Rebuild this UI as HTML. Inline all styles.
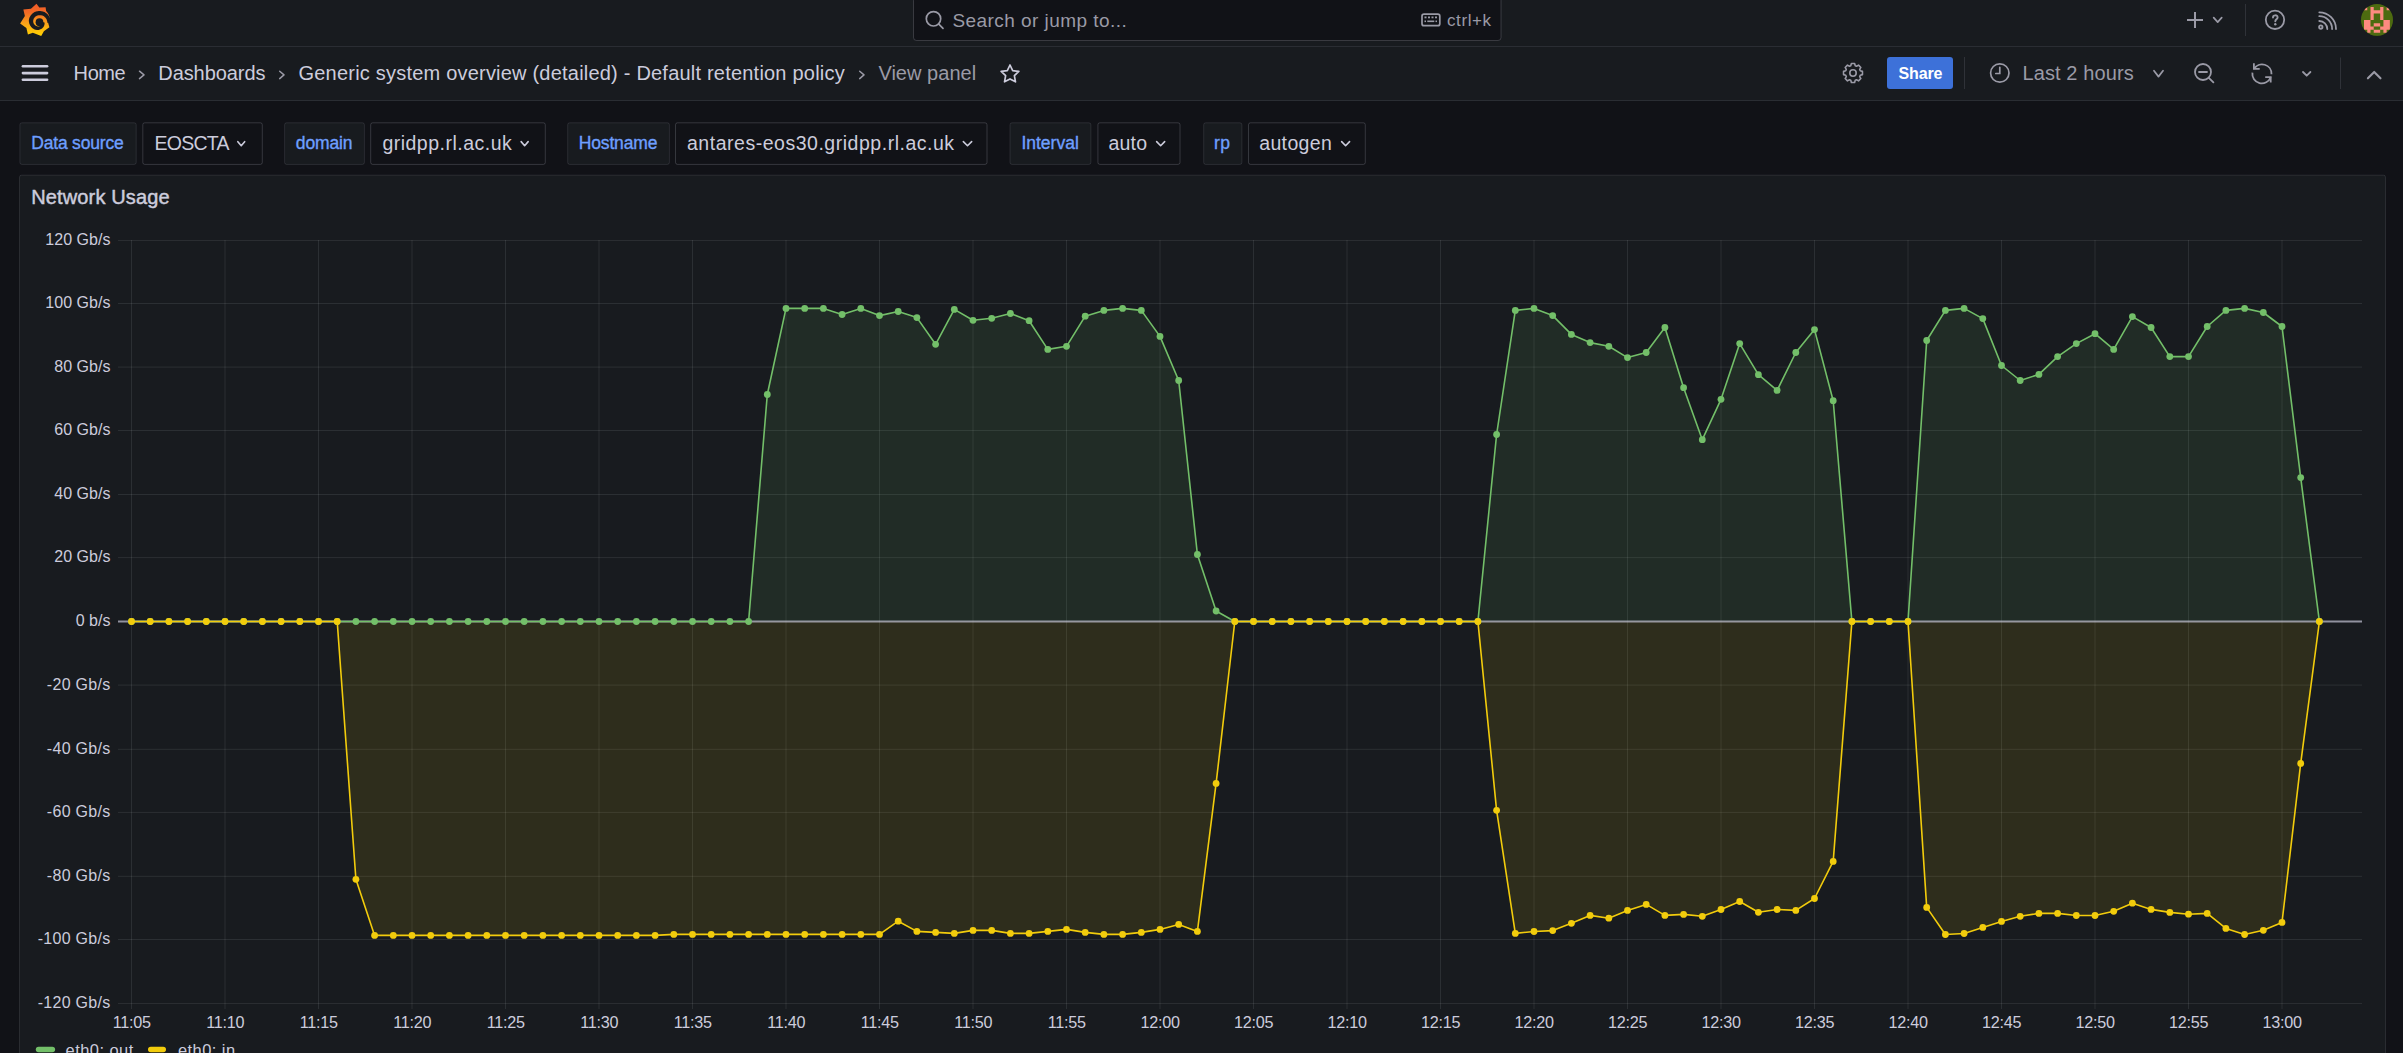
<!DOCTYPE html>
<html><head><meta charset="utf-8"><title>Network Usage - Grafana</title>
<style>
html,body{margin:0;padding:0;background:#111217;width:2403px;height:1053px;overflow:hidden;}
svg{display:block;font-family:"Liberation Sans", sans-serif;}
</style></head>
<body>
<svg width="2403" height="1053" viewBox="0 0 2403 1053">
<rect x="0" y="0" width="2403" height="1053" fill="#111217"/>
<rect x="0" y="0" width="2403" height="46" fill="#181b1f"/>
<rect x="0" y="46" width="2403" height="1" fill="#2a2d33"/>
<rect x="0" y="47" width="2403" height="53" fill="#181b1f"/>
<rect x="0" y="100" width="2403" height="1" fill="#2a2d33"/>
<g transform="translate(15,0) scale(0.03799)">
<defs><linearGradient id="lg" gradientUnits="userSpaceOnUse" x1="0" y1="945" x2="0" y2="100"><stop offset="0" stop-color="#ffd400"/><stop offset="0.4" stop-color="#f9a11a"/><stop offset="0.72" stop-color="#f26b25"/><stop offset="1" stop-color="#f05a28"/></linearGradient></defs>
<path fill="url(#lg)" d="M565,100 L640,195 L805,190 L820,290 C875,350 915,430 915,505 L875,610 L905,720 L760,820 L690,945 L470,860 L340,905 L300,740 L135,620 L260,420 L220,250 L420,230 Z"/>
<path fill="#181b1f" d="M945,610 L946,585 L944,560 L941,536 L935,512 L928,489 L919,467 L908,445 L896,425 L883,405 L867,387 L851,370 L833,355 L815,341 L795,329 L775,318 L754,309 L732,302 L710,297 L688,293 L666,291 L644,290 L622,291 L600,293 L578,297 L557,303 L536,310 L516,319 L497,329 L479,341 L461,355 L445,369 L431,385 L417,402 L405,420 L394,438 L385,457 L377,477 L371,498 L367,519 L364,540 L365,561 L368,582 L372,602 L377,622 L384,641 L393,660 L403,677 L414,693 L426,709 L440,723 L454,736 L469,748 L485,758 L501,767 L518,774 L535,780 L553,785 L571,788 L588,790 L606,790 L623,788 L640,784 L656,779 L671,773 L686,765 L700,757 L713,748 L724,738 L735,727 L745,715 L753,703 L760,691 L766,678 L771,665 L775,652 L777,639 L778,626 L779,614 L778,601 L776,589 L716,582 L717,589 L718,596 L717,604 L716,611 L715,619 L712,626 L709,633 L706,641 L702,648 L697,654 L691,661 L685,667 L678,673 L671,678 L663,682 L654,686 L646,690 L636,692 L627,694 L617,696 L607,696 L597,695 L587,693 L577,690 L567,687 L558,683 L548,678 L539,672 L530,665 L522,658 L515,650 L508,641 L501,632 L495,622 L490,612 L486,601 L483,589 L481,578 L479,566 L479,554 L480,541 L482,529 L485,517 L488,505 L493,494 L499,483 L506,472 L513,462 L522,452 L531,443 L541,435 L551,427 L563,421 L574,415 L587,410 L599,406 L612,403 L626,401 L639,400 L653,400 L667,400 L681,401 L695,403 L709,406 L723,411 L736,417 L750,423 L763,431 L775,440 L787,451 L798,462 L808,474 L817,487 L826,501 L833,516 L839,531 L844,547 L848,564 L850,581 L851,598 Z"/>
<circle cx="645" cy="585" r="102" fill="#181b1f"/>
</g>
<rect x="913.5" y="-2.5" width="587.5" height="43" rx="3" fill="#111217" stroke="rgba(204,204,220,0.20)" stroke-width="1"/>
<g fill="none" stroke="#9a9aa6" stroke-width="1.7" stroke-linecap="round"><circle cx="933.5" cy="18.8" r="7.2"/><path d="M938.8,24.1 L943,28.3"/></g>
<text x="952.4" y="26.8" font-size="19" fill="#9a9aa6" letter-spacing="0.45" font-weight="400" text-anchor="start" >Search or jump to...</text>
<g fill="none" stroke="#9a9aa6" stroke-width="1.7"><rect x="1422" y="14.2" width="17.8" height="11.5" rx="2"/></g><g fill="#9a9aa6"><rect x="1424.5" y="16.5" width="2" height="1.8"/><rect x="1428" y="16.5" width="2" height="1.8"/><rect x="1431.5" y="16.5" width="2" height="1.8"/><rect x="1435" y="16.5" width="2" height="1.8"/><rect x="1424.5" y="20.5" width="1.5" height="1.6"/><rect x="1427.3" y="20.5" width="7" height="1.6"/><rect x="1435.5" y="20.5" width="1.5" height="1.6"/></g>
<text x="1447" y="26" font-size="17" fill="#9a9aa6" letter-spacing="0.59" font-weight="400" text-anchor="start" >ctrl+k</text>
<g stroke="#9a9aa6" stroke-width="2" fill="none"><path d="M2195,12.1 V28.1 M2187,20.1 H2203"/></g>
<path d="M2213.68,17.68 L2217.70,22.12 L2221.72,17.68" fill="none" stroke="#9a9aa6" stroke-width="1.7" stroke-linecap="round" stroke-linejoin="round"/>
<rect x="2245" y="4" width="1" height="32" fill="#2f3238"/>
<circle cx="2275" cy="19.8" r="9.2" fill="none" stroke="#9a9aa6" stroke-width="1.8"/>
<path d="M2273,17.6 C2273,14.6 2277.6,14.6 2277.6,17.4 C2277.6,19.3 2275.3,19.3 2275.3,21.3" fill="none" stroke="#9a9aa6" stroke-width="1.9" stroke-linecap="round"/><circle cx="2275.3" cy="24.2" r="1.2" fill="#9a9aa6"/>
<g fill="none" stroke="#9a9aa6" stroke-width="1.8" stroke-linecap="round"><circle cx="2320.8" cy="27.1" r="1.7"/><path d="M2319.3,21 A8,8 0 0 1 2327.3,29"/><path d="M2319.3,16.2 A12.8,12.8 0 0 1 2332.1,29"/><path d="M2319.3,12.3 A16.7,16.7 0 0 1 2336,29"/></g>
<defs><clipPath id="avc"><circle cx="2377" cy="19.9" r="16"/></clipPath></defs><g clip-path="url(#avc)"><rect x="2361" y="3.9" width="32" height="32" fill="#4d6b10"/><path fill="#fd8a80" d="M2364.03,7.03 h3.23 v3.23 h-3.23 Z M2370.49,7.03 h3.23 v3.23 h-3.23 Z M2380.18,7.03 h3.23 v3.23 h-3.23 Z M2386.64,7.03 h3.23 v3.23 h-3.23 Z M2370.49,10.26 h3.23 v3.23 h-3.23 Z M2373.72,10.26 h3.23 v3.23 h-3.23 Z M2376.95,10.26 h3.23 v3.23 h-3.23 Z M2380.18,10.26 h3.23 v3.23 h-3.23 Z M2370.49,13.49 h3.23 v3.23 h-3.23 Z M2380.18,13.49 h3.23 v3.23 h-3.23 Z M2370.49,16.72 h3.23 v3.23 h-3.23 Z M2380.18,16.72 h3.23 v3.23 h-3.23 Z M2364.03,19.95 h3.23 v3.23 h-3.23 Z M2367.26,19.95 h3.23 v3.23 h-3.23 Z M2383.41,19.95 h3.23 v3.23 h-3.23 Z M2386.64,19.95 h3.23 v3.23 h-3.23 Z M2364.03,23.18 h3.23 v3.23 h-3.23 Z M2367.26,23.18 h3.23 v3.23 h-3.23 Z M2373.72,23.18 h3.23 v3.23 h-3.23 Z M2376.95,23.18 h3.23 v3.23 h-3.23 Z M2383.41,23.18 h3.23 v3.23 h-3.23 Z M2386.64,23.18 h3.23 v3.23 h-3.23 Z M2364.03,26.41 h3.23 v3.23 h-3.23 Z M2367.26,26.41 h3.23 v3.23 h-3.23 Z M2370.49,26.41 h3.23 v3.23 h-3.23 Z M2380.18,26.41 h3.23 v3.23 h-3.23 Z M2383.41,26.41 h3.23 v3.23 h-3.23 Z M2386.64,26.41 h3.23 v3.23 h-3.23 Z M2367.26,29.64 h3.23 v3.23 h-3.23 Z M2373.72,29.64 h3.23 v3.23 h-3.23 Z M2376.95,29.64 h3.23 v3.23 h-3.23 Z M2383.41,29.64 h3.23 v3.23 h-3.23 Z"/></g>
<g fill="#ccccdc"><rect x="21.6" y="65" width="26.8" height="2.6" rx="1.3"/><rect x="21.6" y="71.8" width="26.8" height="2.6" rx="1.3"/><rect x="21.6" y="78.4" width="26.8" height="2.6" rx="1.3"/></g>
<text x="73.6" y="80.2" font-size="20" fill="#ccccdc" letter-spacing="-0.4" font-weight="400" text-anchor="start" >Home</text>
<path d="M139.5,71.2 L144,74.9 L139.5,78.6" fill="none" stroke="#9a9aa6" stroke-width="1.5" stroke-linecap="round" stroke-linejoin="round"/>
<text x="158.3" y="80.2" font-size="20" fill="#ccccdc" letter-spacing="-0.08" font-weight="400" text-anchor="start" >Dashboards</text>
<path d="M279.7,71.2 L284,74.9 L279.7,78.6" fill="none" stroke="#9a9aa6" stroke-width="1.5" stroke-linecap="round" stroke-linejoin="round"/>
<text x="298.5" y="80.2" font-size="20" fill="#ccccdc" letter-spacing="0.21" font-weight="400" text-anchor="start" >Generic system overview (detailed) - Default retention policy</text>
<path d="M859.7,71.2 L864,74.9 L859.7,78.6" fill="none" stroke="#9a9aa6" stroke-width="1.5" stroke-linecap="round" stroke-linejoin="round"/>
<text x="878.4" y="80.2" font-size="20" fill="#9a9aa6" letter-spacing="0.03" font-weight="400" text-anchor="start" >View panel</text>
<path d="M1010.00,65.00 L1012.70,70.58 L1018.84,71.43 L1014.37,75.72 L1015.47,81.82 L1010.00,78.90 L1004.53,81.82 L1005.63,75.72 L1001.16,71.43 L1007.30,70.58 Z" fill="none" stroke="#ccccdc" stroke-width="1.7" stroke-linejoin="round"/>
<path d="M1860.26,70.75 L1862.46,71.38 L1862.46,74.62 L1860.26,75.25 L1859.72,76.55 L1860.84,78.54 L1858.54,80.84 L1856.55,79.72 L1855.25,80.26 L1854.62,82.46 L1851.38,82.46 L1850.75,80.26 L1849.45,79.72 L1847.46,80.84 L1845.16,78.54 L1846.28,76.55 L1845.74,75.25 L1843.54,74.62 L1843.54,71.38 L1845.74,70.75 L1846.28,69.45 L1845.16,67.46 L1847.46,65.16 L1849.45,66.28 L1850.75,65.74 L1851.38,63.54 L1854.62,63.54 L1855.25,65.74 L1856.55,66.28 L1858.54,65.16 L1860.84,67.46 L1859.72,69.45 Z" fill="none" stroke="#9a9aa6" stroke-width="1.6" stroke-linejoin="round"/>
<circle cx="1853" cy="73" r="3.2" fill="none" stroke="#9a9aa6" stroke-width="1.6"/>
<rect x="1887" y="57" width="66" height="32" rx="3" fill="#3d71d9"/>
<text x="1898.4" y="79.3" font-size="16" fill="#ffffff" letter-spacing="-0.09" font-weight="700" text-anchor="start" >Share</text>
<rect x="1964" y="57" width="1" height="32" fill="#2f3238"/>
<circle cx="1999.8" cy="73" r="9.2" fill="none" stroke="#9a9aa6" stroke-width="1.7"/><path d="M1999.8,67.3 V73.5 H1995.8" fill="none" stroke="#9a9aa6" stroke-width="1.7" stroke-linecap="round"/>
<text x="2022.4" y="80.2" font-size="20" fill="#9a9aa6" letter-spacing="0.12" font-weight="400" text-anchor="start" >Last 2 hours</text>
<path d="M2153.98,70.68 L2158.50,76.62 L2163.02,70.68" fill="none" stroke="#9a9aa6" stroke-width="1.7" stroke-linecap="round" stroke-linejoin="round"/>
<g fill="none" stroke="#9a9aa6" stroke-width="1.8" stroke-linecap="round"><circle cx="2203" cy="72" r="8"/><path d="M2208.8,77.8 L2213.4,82.4 M2199,72 H2207"/></g>
<g fill="none" stroke="#9a9aa6" stroke-width="1.8" stroke-linecap="butt" stroke-linejoin="miter"><path d="M2253.9,63.2 V68.9 H2259.7"/><path d="M2253.9,68.9 A9.5,9.5 0 0 1 2271.5,74.2"/><path d="M2252.4,72.6 A9.5,9.5 0 0 0 2270.7,77.2"/><path d="M2265.2,77.2 H2270.7 V82.6"/></g>
<path d="M2303,72 L2306.7,75.7 L2310.4,72" fill="none" stroke="#9a9aa6" stroke-width="1.8" stroke-linecap="round" stroke-linejoin="round"/>
<rect x="2340" y="57.5" width="1" height="31.5" fill="#2f3238"/>
<path d="M2367.9,78.3 L2374.2,71.9 L2380.5,78.3" fill="none" stroke="#9a9aa6" stroke-width="2.1" stroke-linecap="round" stroke-linejoin="round"/>
<rect x="19.9" y="122.8" width="116.3" height="41.6" rx="2" fill="#181b1f" stroke="rgba(204,204,220,0.12)" stroke-width="1"/>
<text x="31.2" y="149.3" font-size="17.5" fill="#6e9fff" letter-spacing="-0.18" font-weight="400" text-anchor="start" stroke="#6e9fff" stroke-width="0.35">Data source</text>
<rect x="284.6" y="122.8" width="79.8" height="41.6" rx="2" fill="#181b1f" stroke="rgba(204,204,220,0.12)" stroke-width="1"/>
<text x="295.8" y="149.3" font-size="17.5" fill="#6e9fff" letter-spacing="-0.15000000000000002" font-weight="400" text-anchor="start" stroke="#6e9fff" stroke-width="0.35">domain</text>
<rect x="567.7" y="122.8" width="101.7" height="41.6" rx="2" fill="#181b1f" stroke="rgba(204,204,220,0.12)" stroke-width="1"/>
<text x="578.8" y="149.3" font-size="17.5" fill="#6e9fff" letter-spacing="-0.16999999999999998" font-weight="400" text-anchor="start" stroke="#6e9fff" stroke-width="0.35">Hostname</text>
<rect x="1010.0" y="122.8" width="80.9" height="41.6" rx="2" fill="#181b1f" stroke="rgba(204,204,220,0.12)" stroke-width="1"/>
<text x="1021.4" y="149.3" font-size="17.5" fill="#6e9fff" letter-spacing="0.0" font-weight="400" text-anchor="start" stroke="#6e9fff" stroke-width="0.35">Interval</text>
<rect x="1203.7" y="122.8" width="38.2" height="41.6" rx="2" fill="#181b1f" stroke="rgba(204,204,220,0.12)" stroke-width="1"/>
<text x="1214" y="149.3" font-size="17.5" fill="#6e9fff" letter-spacing="0.33999999999999997" font-weight="400" text-anchor="start" stroke="#6e9fff" stroke-width="0.35">rp</text>
<rect x="142.8" y="122.8" width="119.5" height="41.6" rx="2" fill="#111217" stroke="rgba(204,204,220,0.20)" stroke-width="1"/>
<text x="154.6" y="150.2" font-size="19.5" fill="#ccccdc" letter-spacing="-0.76" font-weight="400" text-anchor="start" >EOSCTA</text>
<path d="M237.84,141.64 L241.25,145.76 L244.66,141.64" fill="none" stroke="#ccccdc" stroke-width="1.6" stroke-linecap="round" stroke-linejoin="round"/>
<rect x="370.7" y="122.8" width="174.6" height="41.6" rx="2" fill="#111217" stroke="rgba(204,204,220,0.20)" stroke-width="1"/>
<text x="382.4" y="150.2" font-size="19.5" fill="#ccccdc" letter-spacing="0.49" font-weight="400" text-anchor="start" >gridpp.rl.ac.uk</text>
<path d="M521.14,141.64 L524.65,145.76 L528.16,141.64" fill="none" stroke="#ccccdc" stroke-width="1.6" stroke-linecap="round" stroke-linejoin="round"/>
<rect x="675.5" y="122.8" width="311.5" height="41.6" rx="2" fill="#111217" stroke="rgba(204,204,220,0.20)" stroke-width="1"/>
<text x="687" y="150.2" font-size="19.5" fill="#ccccdc" letter-spacing="0.52" font-weight="400" text-anchor="start" >antares-eos30.gridpp.rl.ac.uk</text>
<path d="M963.34,141.64 L967.50,145.76 L971.66,141.64" fill="none" stroke="#ccccdc" stroke-width="1.6" stroke-linecap="round" stroke-linejoin="round"/>
<rect x="1097.9" y="122.8" width="82.1" height="41.6" rx="2" fill="#111217" stroke="rgba(204,204,220,0.20)" stroke-width="1"/>
<text x="1108.5" y="150.2" font-size="19.5" fill="#ccccdc" letter-spacing="0.21" font-weight="400" text-anchor="start" >auto</text>
<path d="M1156.64,141.64 L1160.65,145.76 L1164.66,141.64" fill="none" stroke="#ccccdc" stroke-width="1.6" stroke-linecap="round" stroke-linejoin="round"/>
<rect x="1248.5" y="122.8" width="116.8" height="41.6" rx="2" fill="#111217" stroke="rgba(204,204,220,0.20)" stroke-width="1"/>
<text x="1259.2" y="150.2" font-size="19.5" fill="#ccccdc" letter-spacing="0.37" font-weight="400" text-anchor="start" >autogen</text>
<path d="M1341.64,141.64 L1345.60,145.76 L1349.56,141.64" fill="none" stroke="#ccccdc" stroke-width="1.6" stroke-linecap="round" stroke-linejoin="round"/>
<rect x="19.5" y="175.2" width="2366" height="900" rx="2" fill="#181b1f" stroke="rgba(204,204,220,0.12)" stroke-width="1"/>
<text x="31.2" y="204.3" font-size="20" fill="#ccccdc" letter-spacing="0.14" font-weight="400" text-anchor="start" stroke="#ccccdc" stroke-width="0.45">Network Usage</text>
<line x1="118" y1="240.45" x2="2362" y2="240.45" stroke="rgba(240,250,255,0.09)" stroke-width="1"/>
<line x1="118" y1="303.50" x2="2362" y2="303.50" stroke="rgba(240,250,255,0.09)" stroke-width="1"/>
<line x1="118" y1="367.10" x2="2362" y2="367.10" stroke="rgba(240,250,255,0.09)" stroke-width="1"/>
<line x1="118" y1="430.50" x2="2362" y2="430.50" stroke="rgba(240,250,255,0.09)" stroke-width="1"/>
<line x1="118" y1="494.50" x2="2362" y2="494.50" stroke="rgba(240,250,255,0.09)" stroke-width="1"/>
<line x1="118" y1="557.60" x2="2362" y2="557.60" stroke="rgba(240,250,255,0.09)" stroke-width="1"/>
<line x1="118" y1="685.10" x2="2362" y2="685.10" stroke="rgba(240,250,255,0.09)" stroke-width="1"/>
<line x1="118" y1="749.30" x2="2362" y2="749.30" stroke="rgba(240,250,255,0.09)" stroke-width="1"/>
<line x1="118" y1="812.40" x2="2362" y2="812.40" stroke="rgba(240,250,255,0.09)" stroke-width="1"/>
<line x1="118" y1="876.30" x2="2362" y2="876.30" stroke="rgba(240,250,255,0.09)" stroke-width="1"/>
<line x1="118" y1="939.50" x2="2362" y2="939.50" stroke="rgba(240,250,255,0.09)" stroke-width="1"/>
<line x1="118" y1="1003.45" x2="2362" y2="1003.45" stroke="rgba(240,250,255,0.09)" stroke-width="1"/>
<line x1="131.50" y1="240" x2="131.50" y2="1009" stroke="rgba(240,250,255,0.09)" stroke-width="1"/>
<line x1="225.00" y1="240" x2="225.00" y2="1009" stroke="rgba(240,250,255,0.09)" stroke-width="1"/>
<line x1="318.50" y1="240" x2="318.50" y2="1009" stroke="rgba(240,250,255,0.09)" stroke-width="1"/>
<line x1="412.00" y1="240" x2="412.00" y2="1009" stroke="rgba(240,250,255,0.09)" stroke-width="1"/>
<line x1="505.50" y1="240" x2="505.50" y2="1009" stroke="rgba(240,250,255,0.09)" stroke-width="1"/>
<line x1="599.00" y1="240" x2="599.00" y2="1009" stroke="rgba(240,250,255,0.09)" stroke-width="1"/>
<line x1="692.50" y1="240" x2="692.50" y2="1009" stroke="rgba(240,250,255,0.09)" stroke-width="1"/>
<line x1="786.00" y1="240" x2="786.00" y2="1009" stroke="rgba(240,250,255,0.09)" stroke-width="1"/>
<line x1="879.50" y1="240" x2="879.50" y2="1009" stroke="rgba(240,250,255,0.09)" stroke-width="1"/>
<line x1="973.00" y1="240" x2="973.00" y2="1009" stroke="rgba(240,250,255,0.09)" stroke-width="1"/>
<line x1="1066.50" y1="240" x2="1066.50" y2="1009" stroke="rgba(240,250,255,0.09)" stroke-width="1"/>
<line x1="1160.00" y1="240" x2="1160.00" y2="1009" stroke="rgba(240,250,255,0.09)" stroke-width="1"/>
<line x1="1253.50" y1="240" x2="1253.50" y2="1009" stroke="rgba(240,250,255,0.09)" stroke-width="1"/>
<line x1="1347.00" y1="240" x2="1347.00" y2="1009" stroke="rgba(240,250,255,0.09)" stroke-width="1"/>
<line x1="1440.50" y1="240" x2="1440.50" y2="1009" stroke="rgba(240,250,255,0.09)" stroke-width="1"/>
<line x1="1534.00" y1="240" x2="1534.00" y2="1009" stroke="rgba(240,250,255,0.09)" stroke-width="1"/>
<line x1="1627.50" y1="240" x2="1627.50" y2="1009" stroke="rgba(240,250,255,0.09)" stroke-width="1"/>
<line x1="1721.00" y1="240" x2="1721.00" y2="1009" stroke="rgba(240,250,255,0.09)" stroke-width="1"/>
<line x1="1814.50" y1="240" x2="1814.50" y2="1009" stroke="rgba(240,250,255,0.09)" stroke-width="1"/>
<line x1="1908.00" y1="240" x2="1908.00" y2="1009" stroke="rgba(240,250,255,0.09)" stroke-width="1"/>
<line x1="2001.50" y1="240" x2="2001.50" y2="1009" stroke="rgba(240,250,255,0.09)" stroke-width="1"/>
<line x1="2095.00" y1="240" x2="2095.00" y2="1009" stroke="rgba(240,250,255,0.09)" stroke-width="1"/>
<line x1="2188.50" y1="240" x2="2188.50" y2="1009" stroke="rgba(240,250,255,0.09)" stroke-width="1"/>
<line x1="2282.00" y1="240" x2="2282.00" y2="1009" stroke="rgba(240,250,255,0.09)" stroke-width="1"/>
<path d="M131.50,621.5 L131.50,621.50 L150.20,621.50 L168.90,621.50 L187.60,621.50 L206.30,621.50 L225.00,621.50 L243.70,621.50 L262.40,621.50 L281.10,621.50 L299.80,621.50 L318.50,621.50 L337.20,621.50 L355.90,621.50 L374.60,621.50 L393.30,621.50 L412.00,621.50 L430.70,621.50 L449.40,621.50 L468.10,621.50 L486.80,621.50 L505.50,621.50 L524.20,621.50 L542.90,621.50 L561.60,621.50 L580.30,621.50 L599.00,621.50 L617.70,621.50 L636.40,621.50 L655.10,621.50 L673.80,621.50 L692.50,621.50 L711.20,621.50 L729.90,621.50 L748.60,621.50 L767.30,394.50 L786.00,308.40 L804.70,308.40 L823.40,308.40 L842.10,314.50 L860.80,308.40 L879.50,315.60 L898.20,311.50 L916.90,317.60 L935.60,344.30 L954.30,309.40 L973.00,320.30 L991.70,318.30 L1010.40,313.50 L1029.10,320.70 L1047.80,349.40 L1066.50,346.30 L1085.20,316.20 L1103.90,310.40 L1122.60,308.40 L1141.30,310.40 L1160.00,336.40 L1178.70,380.50 L1197.40,554.50 L1216.10,611.00 L1234.80,621.50 L1253.50,621.50 L1272.20,621.50 L1290.90,621.50 L1309.60,621.50 L1328.30,621.50 L1347.00,621.50 L1365.70,621.50 L1384.40,621.50 L1403.10,621.50 L1421.80,621.50 L1440.50,621.50 L1459.20,621.50 L1477.90,621.50 L1496.60,434.50 L1515.30,310.40 L1534.00,308.40 L1552.70,315.60 L1571.40,334.40 L1590.10,342.60 L1608.80,346.30 L1627.50,357.60 L1646.20,352.50 L1664.90,327.50 L1683.60,387.70 L1702.30,439.70 L1721.00,399.30 L1739.70,343.60 L1758.40,374.70 L1777.10,390.40 L1795.80,352.50 L1814.50,329.60 L1833.20,400.70 L1851.90,621.50 L1870.60,621.50 L1889.30,621.50 L1908.00,621.50 L1926.70,340.50 L1945.40,310.40 L1964.10,308.40 L1982.80,318.60 L2001.50,365.50 L2020.20,380.50 L2038.90,374.40 L2057.60,356.60 L2076.30,343.60 L2095.00,333.70 L2113.70,349.40 L2132.40,316.60 L2151.10,327.50 L2169.80,356.60 L2188.50,356.60 L2207.20,326.50 L2225.90,310.40 L2244.60,308.40 L2263.30,312.50 L2282.00,326.50 L2300.70,477.60 L2319.40,621.50 L2319.40,621.5 Z" fill="rgba(115,191,105,0.105)"/>
<path d="M131.50,621.5 L131.50,621.50 L150.20,621.50 L168.90,621.50 L187.60,621.50 L206.30,621.50 L225.00,621.50 L243.70,621.50 L262.40,621.50 L281.10,621.50 L299.80,621.50 L318.50,621.50 L337.20,621.50 L355.90,879.30 L374.60,935.40 L393.30,935.40 L412.00,935.40 L430.70,935.40 L449.40,935.40 L468.10,935.40 L486.80,935.40 L505.50,935.40 L524.20,935.40 L542.90,935.40 L561.60,935.40 L580.30,935.40 L599.00,935.40 L617.70,935.40 L636.40,935.40 L655.10,935.40 L673.80,934.40 L692.50,934.40 L711.20,934.40 L729.90,934.40 L748.60,934.40 L767.30,934.40 L786.00,934.40 L804.70,934.40 L823.40,934.40 L842.10,934.40 L860.80,934.40 L879.50,934.40 L898.20,921.20 L916.90,931.40 L935.60,932.40 L954.30,933.40 L973.00,930.40 L991.70,930.40 L1010.40,933.40 L1029.10,933.40 L1047.80,931.40 L1066.50,929.40 L1085.20,932.40 L1103.90,934.40 L1122.60,934.40 L1141.30,932.40 L1160.00,929.40 L1178.70,924.40 L1197.40,931.40 L1216.10,783.40 L1234.80,621.50 L1253.50,621.50 L1272.20,621.50 L1290.90,621.50 L1309.60,621.50 L1328.30,621.50 L1347.00,621.50 L1365.70,621.50 L1384.40,621.50 L1403.10,621.50 L1421.80,621.50 L1440.50,621.50 L1459.20,621.50 L1477.90,621.50 L1496.60,810.30 L1515.30,933.40 L1534.00,931.50 L1552.70,930.60 L1571.40,923.30 L1590.10,915.40 L1608.80,918.20 L1627.50,910.40 L1646.20,904.40 L1664.90,915.40 L1683.60,914.40 L1702.30,916.30 L1721.00,909.50 L1739.70,901.50 L1758.40,912.30 L1777.10,909.50 L1795.80,910.40 L1814.50,898.50 L1833.20,861.40 L1851.90,621.50 L1870.60,621.50 L1889.30,621.50 L1908.00,621.50 L1926.70,907.40 L1945.40,934.50 L1964.10,933.50 L1982.80,927.40 L2001.50,921.40 L2020.20,916.30 L2038.90,913.40 L2057.60,913.40 L2076.30,915.50 L2095.00,915.50 L2113.70,911.30 L2132.40,903.20 L2151.10,909.40 L2169.80,912.40 L2188.50,914.20 L2207.20,913.40 L2225.90,928.40 L2244.60,934.50 L2263.30,930.30 L2282.00,922.40 L2300.70,763.40 L2319.40,621.50 L2319.40,621.5 Z" fill="rgba(242,204,12,0.10)"/>
<line x1="118" y1="621.5" x2="2362" y2="621.5" stroke="rgba(204,204,220,0.68)" stroke-width="2"/>
<path d="M131.50,621.50 L150.20,621.50 L168.90,621.50 L187.60,621.50 L206.30,621.50 L225.00,621.50 L243.70,621.50 L262.40,621.50 L281.10,621.50 L299.80,621.50 L318.50,621.50 L337.20,621.50 L355.90,621.50 L374.60,621.50 L393.30,621.50 L412.00,621.50 L430.70,621.50 L449.40,621.50 L468.10,621.50 L486.80,621.50 L505.50,621.50 L524.20,621.50 L542.90,621.50 L561.60,621.50 L580.30,621.50 L599.00,621.50 L617.70,621.50 L636.40,621.50 L655.10,621.50 L673.80,621.50 L692.50,621.50 L711.20,621.50 L729.90,621.50 L748.60,621.50 L767.30,394.50 L786.00,308.40 L804.70,308.40 L823.40,308.40 L842.10,314.50 L860.80,308.40 L879.50,315.60 L898.20,311.50 L916.90,317.60 L935.60,344.30 L954.30,309.40 L973.00,320.30 L991.70,318.30 L1010.40,313.50 L1029.10,320.70 L1047.80,349.40 L1066.50,346.30 L1085.20,316.20 L1103.90,310.40 L1122.60,308.40 L1141.30,310.40 L1160.00,336.40 L1178.70,380.50 L1197.40,554.50 L1216.10,611.00 L1234.80,621.50 L1253.50,621.50 L1272.20,621.50 L1290.90,621.50 L1309.60,621.50 L1328.30,621.50 L1347.00,621.50 L1365.70,621.50 L1384.40,621.50 L1403.10,621.50 L1421.80,621.50 L1440.50,621.50 L1459.20,621.50 L1477.90,621.50 L1496.60,434.50 L1515.30,310.40 L1534.00,308.40 L1552.70,315.60 L1571.40,334.40 L1590.10,342.60 L1608.80,346.30 L1627.50,357.60 L1646.20,352.50 L1664.90,327.50 L1683.60,387.70 L1702.30,439.70 L1721.00,399.30 L1739.70,343.60 L1758.40,374.70 L1777.10,390.40 L1795.80,352.50 L1814.50,329.60 L1833.20,400.70 L1851.90,621.50 L1870.60,621.50 L1889.30,621.50 L1908.00,621.50 L1926.70,340.50 L1945.40,310.40 L1964.10,308.40 L1982.80,318.60 L2001.50,365.50 L2020.20,380.50 L2038.90,374.40 L2057.60,356.60 L2076.30,343.60 L2095.00,333.70 L2113.70,349.40 L2132.40,316.60 L2151.10,327.50 L2169.80,356.60 L2188.50,356.60 L2207.20,326.50 L2225.90,310.40 L2244.60,308.40 L2263.30,312.50 L2282.00,326.50 L2300.70,477.60 L2319.40,621.50" fill="none" stroke="#73bf69" stroke-width="1.6" stroke-linejoin="round"/>
<g fill="#73bf69"><circle cx="131.50" cy="621.50" r="3.4"/><circle cx="150.20" cy="621.50" r="3.4"/><circle cx="168.90" cy="621.50" r="3.4"/><circle cx="187.60" cy="621.50" r="3.4"/><circle cx="206.30" cy="621.50" r="3.4"/><circle cx="225.00" cy="621.50" r="3.4"/><circle cx="243.70" cy="621.50" r="3.4"/><circle cx="262.40" cy="621.50" r="3.4"/><circle cx="281.10" cy="621.50" r="3.4"/><circle cx="299.80" cy="621.50" r="3.4"/><circle cx="318.50" cy="621.50" r="3.4"/><circle cx="337.20" cy="621.50" r="3.4"/><circle cx="355.90" cy="621.50" r="3.4"/><circle cx="374.60" cy="621.50" r="3.4"/><circle cx="393.30" cy="621.50" r="3.4"/><circle cx="412.00" cy="621.50" r="3.4"/><circle cx="430.70" cy="621.50" r="3.4"/><circle cx="449.40" cy="621.50" r="3.4"/><circle cx="468.10" cy="621.50" r="3.4"/><circle cx="486.80" cy="621.50" r="3.4"/><circle cx="505.50" cy="621.50" r="3.4"/><circle cx="524.20" cy="621.50" r="3.4"/><circle cx="542.90" cy="621.50" r="3.4"/><circle cx="561.60" cy="621.50" r="3.4"/><circle cx="580.30" cy="621.50" r="3.4"/><circle cx="599.00" cy="621.50" r="3.4"/><circle cx="617.70" cy="621.50" r="3.4"/><circle cx="636.40" cy="621.50" r="3.4"/><circle cx="655.10" cy="621.50" r="3.4"/><circle cx="673.80" cy="621.50" r="3.4"/><circle cx="692.50" cy="621.50" r="3.4"/><circle cx="711.20" cy="621.50" r="3.4"/><circle cx="729.90" cy="621.50" r="3.4"/><circle cx="748.60" cy="621.50" r="3.4"/><circle cx="767.30" cy="394.50" r="3.4"/><circle cx="786.00" cy="308.40" r="3.4"/><circle cx="804.70" cy="308.40" r="3.4"/><circle cx="823.40" cy="308.40" r="3.4"/><circle cx="842.10" cy="314.50" r="3.4"/><circle cx="860.80" cy="308.40" r="3.4"/><circle cx="879.50" cy="315.60" r="3.4"/><circle cx="898.20" cy="311.50" r="3.4"/><circle cx="916.90" cy="317.60" r="3.4"/><circle cx="935.60" cy="344.30" r="3.4"/><circle cx="954.30" cy="309.40" r="3.4"/><circle cx="973.00" cy="320.30" r="3.4"/><circle cx="991.70" cy="318.30" r="3.4"/><circle cx="1010.40" cy="313.50" r="3.4"/><circle cx="1029.10" cy="320.70" r="3.4"/><circle cx="1047.80" cy="349.40" r="3.4"/><circle cx="1066.50" cy="346.30" r="3.4"/><circle cx="1085.20" cy="316.20" r="3.4"/><circle cx="1103.90" cy="310.40" r="3.4"/><circle cx="1122.60" cy="308.40" r="3.4"/><circle cx="1141.30" cy="310.40" r="3.4"/><circle cx="1160.00" cy="336.40" r="3.4"/><circle cx="1178.70" cy="380.50" r="3.4"/><circle cx="1197.40" cy="554.50" r="3.4"/><circle cx="1216.10" cy="611.00" r="3.4"/><circle cx="1234.80" cy="621.50" r="3.4"/><circle cx="1253.50" cy="621.50" r="3.4"/><circle cx="1272.20" cy="621.50" r="3.4"/><circle cx="1290.90" cy="621.50" r="3.4"/><circle cx="1309.60" cy="621.50" r="3.4"/><circle cx="1328.30" cy="621.50" r="3.4"/><circle cx="1347.00" cy="621.50" r="3.4"/><circle cx="1365.70" cy="621.50" r="3.4"/><circle cx="1384.40" cy="621.50" r="3.4"/><circle cx="1403.10" cy="621.50" r="3.4"/><circle cx="1421.80" cy="621.50" r="3.4"/><circle cx="1440.50" cy="621.50" r="3.4"/><circle cx="1459.20" cy="621.50" r="3.4"/><circle cx="1477.90" cy="621.50" r="3.4"/><circle cx="1496.60" cy="434.50" r="3.4"/><circle cx="1515.30" cy="310.40" r="3.4"/><circle cx="1534.00" cy="308.40" r="3.4"/><circle cx="1552.70" cy="315.60" r="3.4"/><circle cx="1571.40" cy="334.40" r="3.4"/><circle cx="1590.10" cy="342.60" r="3.4"/><circle cx="1608.80" cy="346.30" r="3.4"/><circle cx="1627.50" cy="357.60" r="3.4"/><circle cx="1646.20" cy="352.50" r="3.4"/><circle cx="1664.90" cy="327.50" r="3.4"/><circle cx="1683.60" cy="387.70" r="3.4"/><circle cx="1702.30" cy="439.70" r="3.4"/><circle cx="1721.00" cy="399.30" r="3.4"/><circle cx="1739.70" cy="343.60" r="3.4"/><circle cx="1758.40" cy="374.70" r="3.4"/><circle cx="1777.10" cy="390.40" r="3.4"/><circle cx="1795.80" cy="352.50" r="3.4"/><circle cx="1814.50" cy="329.60" r="3.4"/><circle cx="1833.20" cy="400.70" r="3.4"/><circle cx="1851.90" cy="621.50" r="3.4"/><circle cx="1870.60" cy="621.50" r="3.4"/><circle cx="1889.30" cy="621.50" r="3.4"/><circle cx="1908.00" cy="621.50" r="3.4"/><circle cx="1926.70" cy="340.50" r="3.4"/><circle cx="1945.40" cy="310.40" r="3.4"/><circle cx="1964.10" cy="308.40" r="3.4"/><circle cx="1982.80" cy="318.60" r="3.4"/><circle cx="2001.50" cy="365.50" r="3.4"/><circle cx="2020.20" cy="380.50" r="3.4"/><circle cx="2038.90" cy="374.40" r="3.4"/><circle cx="2057.60" cy="356.60" r="3.4"/><circle cx="2076.30" cy="343.60" r="3.4"/><circle cx="2095.00" cy="333.70" r="3.4"/><circle cx="2113.70" cy="349.40" r="3.4"/><circle cx="2132.40" cy="316.60" r="3.4"/><circle cx="2151.10" cy="327.50" r="3.4"/><circle cx="2169.80" cy="356.60" r="3.4"/><circle cx="2188.50" cy="356.60" r="3.4"/><circle cx="2207.20" cy="326.50" r="3.4"/><circle cx="2225.90" cy="310.40" r="3.4"/><circle cx="2244.60" cy="308.40" r="3.4"/><circle cx="2263.30" cy="312.50" r="3.4"/><circle cx="2282.00" cy="326.50" r="3.4"/><circle cx="2300.70" cy="477.60" r="3.4"/><circle cx="2319.40" cy="621.50" r="3.4"/></g>
<path d="M131.50,621.50 L150.20,621.50 L168.90,621.50 L187.60,621.50 L206.30,621.50 L225.00,621.50 L243.70,621.50 L262.40,621.50 L281.10,621.50 L299.80,621.50 L318.50,621.50 L337.20,621.50 L355.90,879.30 L374.60,935.40 L393.30,935.40 L412.00,935.40 L430.70,935.40 L449.40,935.40 L468.10,935.40 L486.80,935.40 L505.50,935.40 L524.20,935.40 L542.90,935.40 L561.60,935.40 L580.30,935.40 L599.00,935.40 L617.70,935.40 L636.40,935.40 L655.10,935.40 L673.80,934.40 L692.50,934.40 L711.20,934.40 L729.90,934.40 L748.60,934.40 L767.30,934.40 L786.00,934.40 L804.70,934.40 L823.40,934.40 L842.10,934.40 L860.80,934.40 L879.50,934.40 L898.20,921.20 L916.90,931.40 L935.60,932.40 L954.30,933.40 L973.00,930.40 L991.70,930.40 L1010.40,933.40 L1029.10,933.40 L1047.80,931.40 L1066.50,929.40 L1085.20,932.40 L1103.90,934.40 L1122.60,934.40 L1141.30,932.40 L1160.00,929.40 L1178.70,924.40 L1197.40,931.40 L1216.10,783.40 L1234.80,621.50 L1253.50,621.50 L1272.20,621.50 L1290.90,621.50 L1309.60,621.50 L1328.30,621.50 L1347.00,621.50 L1365.70,621.50 L1384.40,621.50 L1403.10,621.50 L1421.80,621.50 L1440.50,621.50 L1459.20,621.50 L1477.90,621.50 L1496.60,810.30 L1515.30,933.40 L1534.00,931.50 L1552.70,930.60 L1571.40,923.30 L1590.10,915.40 L1608.80,918.20 L1627.50,910.40 L1646.20,904.40 L1664.90,915.40 L1683.60,914.40 L1702.30,916.30 L1721.00,909.50 L1739.70,901.50 L1758.40,912.30 L1777.10,909.50 L1795.80,910.40 L1814.50,898.50 L1833.20,861.40 L1851.90,621.50 L1870.60,621.50 L1889.30,621.50 L1908.00,621.50 L1926.70,907.40 L1945.40,934.50 L1964.10,933.50 L1982.80,927.40 L2001.50,921.40 L2020.20,916.30 L2038.90,913.40 L2057.60,913.40 L2076.30,915.50 L2095.00,915.50 L2113.70,911.30 L2132.40,903.20 L2151.10,909.40 L2169.80,912.40 L2188.50,914.20 L2207.20,913.40 L2225.90,928.40 L2244.60,934.50 L2263.30,930.30 L2282.00,922.40 L2300.70,763.40 L2319.40,621.50" fill="none" stroke="#f2cc0c" stroke-width="1.6" stroke-linejoin="round"/>
<g fill="#f2cc0c"><circle cx="131.50" cy="621.50" r="3.4"/><circle cx="150.20" cy="621.50" r="3.4"/><circle cx="168.90" cy="621.50" r="3.4"/><circle cx="187.60" cy="621.50" r="3.4"/><circle cx="206.30" cy="621.50" r="3.4"/><circle cx="225.00" cy="621.50" r="3.4"/><circle cx="243.70" cy="621.50" r="3.4"/><circle cx="262.40" cy="621.50" r="3.4"/><circle cx="281.10" cy="621.50" r="3.4"/><circle cx="299.80" cy="621.50" r="3.4"/><circle cx="318.50" cy="621.50" r="3.4"/><circle cx="337.20" cy="621.50" r="3.4"/><circle cx="355.90" cy="879.30" r="3.4"/><circle cx="374.60" cy="935.40" r="3.4"/><circle cx="393.30" cy="935.40" r="3.4"/><circle cx="412.00" cy="935.40" r="3.4"/><circle cx="430.70" cy="935.40" r="3.4"/><circle cx="449.40" cy="935.40" r="3.4"/><circle cx="468.10" cy="935.40" r="3.4"/><circle cx="486.80" cy="935.40" r="3.4"/><circle cx="505.50" cy="935.40" r="3.4"/><circle cx="524.20" cy="935.40" r="3.4"/><circle cx="542.90" cy="935.40" r="3.4"/><circle cx="561.60" cy="935.40" r="3.4"/><circle cx="580.30" cy="935.40" r="3.4"/><circle cx="599.00" cy="935.40" r="3.4"/><circle cx="617.70" cy="935.40" r="3.4"/><circle cx="636.40" cy="935.40" r="3.4"/><circle cx="655.10" cy="935.40" r="3.4"/><circle cx="673.80" cy="934.40" r="3.4"/><circle cx="692.50" cy="934.40" r="3.4"/><circle cx="711.20" cy="934.40" r="3.4"/><circle cx="729.90" cy="934.40" r="3.4"/><circle cx="748.60" cy="934.40" r="3.4"/><circle cx="767.30" cy="934.40" r="3.4"/><circle cx="786.00" cy="934.40" r="3.4"/><circle cx="804.70" cy="934.40" r="3.4"/><circle cx="823.40" cy="934.40" r="3.4"/><circle cx="842.10" cy="934.40" r="3.4"/><circle cx="860.80" cy="934.40" r="3.4"/><circle cx="879.50" cy="934.40" r="3.4"/><circle cx="898.20" cy="921.20" r="3.4"/><circle cx="916.90" cy="931.40" r="3.4"/><circle cx="935.60" cy="932.40" r="3.4"/><circle cx="954.30" cy="933.40" r="3.4"/><circle cx="973.00" cy="930.40" r="3.4"/><circle cx="991.70" cy="930.40" r="3.4"/><circle cx="1010.40" cy="933.40" r="3.4"/><circle cx="1029.10" cy="933.40" r="3.4"/><circle cx="1047.80" cy="931.40" r="3.4"/><circle cx="1066.50" cy="929.40" r="3.4"/><circle cx="1085.20" cy="932.40" r="3.4"/><circle cx="1103.90" cy="934.40" r="3.4"/><circle cx="1122.60" cy="934.40" r="3.4"/><circle cx="1141.30" cy="932.40" r="3.4"/><circle cx="1160.00" cy="929.40" r="3.4"/><circle cx="1178.70" cy="924.40" r="3.4"/><circle cx="1197.40" cy="931.40" r="3.4"/><circle cx="1216.10" cy="783.40" r="3.4"/><circle cx="1234.80" cy="621.50" r="3.4"/><circle cx="1253.50" cy="621.50" r="3.4"/><circle cx="1272.20" cy="621.50" r="3.4"/><circle cx="1290.90" cy="621.50" r="3.4"/><circle cx="1309.60" cy="621.50" r="3.4"/><circle cx="1328.30" cy="621.50" r="3.4"/><circle cx="1347.00" cy="621.50" r="3.4"/><circle cx="1365.70" cy="621.50" r="3.4"/><circle cx="1384.40" cy="621.50" r="3.4"/><circle cx="1403.10" cy="621.50" r="3.4"/><circle cx="1421.80" cy="621.50" r="3.4"/><circle cx="1440.50" cy="621.50" r="3.4"/><circle cx="1459.20" cy="621.50" r="3.4"/><circle cx="1477.90" cy="621.50" r="3.4"/><circle cx="1496.60" cy="810.30" r="3.4"/><circle cx="1515.30" cy="933.40" r="3.4"/><circle cx="1534.00" cy="931.50" r="3.4"/><circle cx="1552.70" cy="930.60" r="3.4"/><circle cx="1571.40" cy="923.30" r="3.4"/><circle cx="1590.10" cy="915.40" r="3.4"/><circle cx="1608.80" cy="918.20" r="3.4"/><circle cx="1627.50" cy="910.40" r="3.4"/><circle cx="1646.20" cy="904.40" r="3.4"/><circle cx="1664.90" cy="915.40" r="3.4"/><circle cx="1683.60" cy="914.40" r="3.4"/><circle cx="1702.30" cy="916.30" r="3.4"/><circle cx="1721.00" cy="909.50" r="3.4"/><circle cx="1739.70" cy="901.50" r="3.4"/><circle cx="1758.40" cy="912.30" r="3.4"/><circle cx="1777.10" cy="909.50" r="3.4"/><circle cx="1795.80" cy="910.40" r="3.4"/><circle cx="1814.50" cy="898.50" r="3.4"/><circle cx="1833.20" cy="861.40" r="3.4"/><circle cx="1851.90" cy="621.50" r="3.4"/><circle cx="1870.60" cy="621.50" r="3.4"/><circle cx="1889.30" cy="621.50" r="3.4"/><circle cx="1908.00" cy="621.50" r="3.4"/><circle cx="1926.70" cy="907.40" r="3.4"/><circle cx="1945.40" cy="934.50" r="3.4"/><circle cx="1964.10" cy="933.50" r="3.4"/><circle cx="1982.80" cy="927.40" r="3.4"/><circle cx="2001.50" cy="921.40" r="3.4"/><circle cx="2020.20" cy="916.30" r="3.4"/><circle cx="2038.90" cy="913.40" r="3.4"/><circle cx="2057.60" cy="913.40" r="3.4"/><circle cx="2076.30" cy="915.50" r="3.4"/><circle cx="2095.00" cy="915.50" r="3.4"/><circle cx="2113.70" cy="911.30" r="3.4"/><circle cx="2132.40" cy="903.20" r="3.4"/><circle cx="2151.10" cy="909.40" r="3.4"/><circle cx="2169.80" cy="912.40" r="3.4"/><circle cx="2188.50" cy="914.20" r="3.4"/><circle cx="2207.20" cy="913.40" r="3.4"/><circle cx="2225.90" cy="928.40" r="3.4"/><circle cx="2244.60" cy="934.50" r="3.4"/><circle cx="2263.30" cy="930.30" r="3.4"/><circle cx="2282.00" cy="922.40" r="3.4"/><circle cx="2300.70" cy="763.40" r="3.4"/><circle cx="2319.40" cy="621.50" r="3.4"/></g>
<text x="110.6" y="245.25" font-size="16" fill="#ccccdc" letter-spacing="0.05" font-weight="400" text-anchor="end" >120 Gb/s</text>
<text x="110.6" y="308.30" font-size="16" fill="#ccccdc" letter-spacing="0.05" font-weight="400" text-anchor="end" >100 Gb/s</text>
<text x="110.6" y="371.90" font-size="16" fill="#ccccdc" letter-spacing="0.05" font-weight="400" text-anchor="end" >80 Gb/s</text>
<text x="110.6" y="435.30" font-size="16" fill="#ccccdc" letter-spacing="0.05" font-weight="400" text-anchor="end" >60 Gb/s</text>
<text x="110.6" y="499.30" font-size="16" fill="#ccccdc" letter-spacing="0.05" font-weight="400" text-anchor="end" >40 Gb/s</text>
<text x="110.6" y="562.40" font-size="16" fill="#ccccdc" letter-spacing="0.05" font-weight="400" text-anchor="end" >20 Gb/s</text>
<text x="110.6" y="626.30" font-size="16" fill="#ccccdc" letter-spacing="0.05" font-weight="400" text-anchor="end" >0 b/s</text>
<text x="110.6" y="689.90" font-size="16" fill="#ccccdc" letter-spacing="0.3" font-weight="400" text-anchor="end" >-20 Gb/s</text>
<text x="110.6" y="754.10" font-size="16" fill="#ccccdc" letter-spacing="0.3" font-weight="400" text-anchor="end" >-40 Gb/s</text>
<text x="110.6" y="817.20" font-size="16" fill="#ccccdc" letter-spacing="0.3" font-weight="400" text-anchor="end" >-60 Gb/s</text>
<text x="110.6" y="881.10" font-size="16" fill="#ccccdc" letter-spacing="0.3" font-weight="400" text-anchor="end" >-80 Gb/s</text>
<text x="110.6" y="944.30" font-size="16" fill="#ccccdc" letter-spacing="0.3" font-weight="400" text-anchor="end" >-100 Gb/s</text>
<text x="110.6" y="1008.25" font-size="16" fill="#ccccdc" letter-spacing="0.3" font-weight="400" text-anchor="end" >-120 Gb/s</text>
<text x="131.70" y="1028.1" font-size="16.2" fill="#ccccdc" letter-spacing="-0.25" font-weight="400" text-anchor="middle" >11:05</text>
<text x="225.20" y="1028.1" font-size="16.2" fill="#ccccdc" letter-spacing="-0.25" font-weight="400" text-anchor="middle" >11:10</text>
<text x="318.70" y="1028.1" font-size="16.2" fill="#ccccdc" letter-spacing="-0.25" font-weight="400" text-anchor="middle" >11:15</text>
<text x="412.20" y="1028.1" font-size="16.2" fill="#ccccdc" letter-spacing="-0.25" font-weight="400" text-anchor="middle" >11:20</text>
<text x="505.70" y="1028.1" font-size="16.2" fill="#ccccdc" letter-spacing="-0.25" font-weight="400" text-anchor="middle" >11:25</text>
<text x="599.20" y="1028.1" font-size="16.2" fill="#ccccdc" letter-spacing="-0.25" font-weight="400" text-anchor="middle" >11:30</text>
<text x="692.70" y="1028.1" font-size="16.2" fill="#ccccdc" letter-spacing="-0.25" font-weight="400" text-anchor="middle" >11:35</text>
<text x="786.20" y="1028.1" font-size="16.2" fill="#ccccdc" letter-spacing="-0.25" font-weight="400" text-anchor="middle" >11:40</text>
<text x="879.70" y="1028.1" font-size="16.2" fill="#ccccdc" letter-spacing="-0.25" font-weight="400" text-anchor="middle" >11:45</text>
<text x="973.20" y="1028.1" font-size="16.2" fill="#ccccdc" letter-spacing="-0.25" font-weight="400" text-anchor="middle" >11:50</text>
<text x="1066.70" y="1028.1" font-size="16.2" fill="#ccccdc" letter-spacing="-0.25" font-weight="400" text-anchor="middle" >11:55</text>
<text x="1160.20" y="1028.1" font-size="16.2" fill="#ccccdc" letter-spacing="-0.25" font-weight="400" text-anchor="middle" >12:00</text>
<text x="1253.70" y="1028.1" font-size="16.2" fill="#ccccdc" letter-spacing="-0.25" font-weight="400" text-anchor="middle" >12:05</text>
<text x="1347.20" y="1028.1" font-size="16.2" fill="#ccccdc" letter-spacing="-0.25" font-weight="400" text-anchor="middle" >12:10</text>
<text x="1440.70" y="1028.1" font-size="16.2" fill="#ccccdc" letter-spacing="-0.25" font-weight="400" text-anchor="middle" >12:15</text>
<text x="1534.20" y="1028.1" font-size="16.2" fill="#ccccdc" letter-spacing="-0.25" font-weight="400" text-anchor="middle" >12:20</text>
<text x="1627.70" y="1028.1" font-size="16.2" fill="#ccccdc" letter-spacing="-0.25" font-weight="400" text-anchor="middle" >12:25</text>
<text x="1721.20" y="1028.1" font-size="16.2" fill="#ccccdc" letter-spacing="-0.25" font-weight="400" text-anchor="middle" >12:30</text>
<text x="1814.70" y="1028.1" font-size="16.2" fill="#ccccdc" letter-spacing="-0.25" font-weight="400" text-anchor="middle" >12:35</text>
<text x="1908.20" y="1028.1" font-size="16.2" fill="#ccccdc" letter-spacing="-0.25" font-weight="400" text-anchor="middle" >12:40</text>
<text x="2001.70" y="1028.1" font-size="16.2" fill="#ccccdc" letter-spacing="-0.25" font-weight="400" text-anchor="middle" >12:45</text>
<text x="2095.20" y="1028.1" font-size="16.2" fill="#ccccdc" letter-spacing="-0.25" font-weight="400" text-anchor="middle" >12:50</text>
<text x="2188.70" y="1028.1" font-size="16.2" fill="#ccccdc" letter-spacing="-0.25" font-weight="400" text-anchor="middle" >12:55</text>
<text x="2282.20" y="1028.1" font-size="16.2" fill="#ccccdc" letter-spacing="-0.25" font-weight="400" text-anchor="middle" >13:00</text>
<rect x="35.8" y="1046.7" width="19.3" height="5.6" rx="2.8" fill="#73bf69"/>
<text x="65.5" y="1056" font-size="16.5" fill="#ccccdc" letter-spacing="0.45" font-weight="400" text-anchor="start" >eth0: out</text>
<rect x="148" y="1046.7" width="18" height="5.6" rx="2.8" fill="#f2cc0c"/>
<text x="177.9" y="1056" font-size="16.5" fill="#ccccdc" letter-spacing="0.45" font-weight="400" text-anchor="start" >eth0: in</text>
</svg>
</body></html>
